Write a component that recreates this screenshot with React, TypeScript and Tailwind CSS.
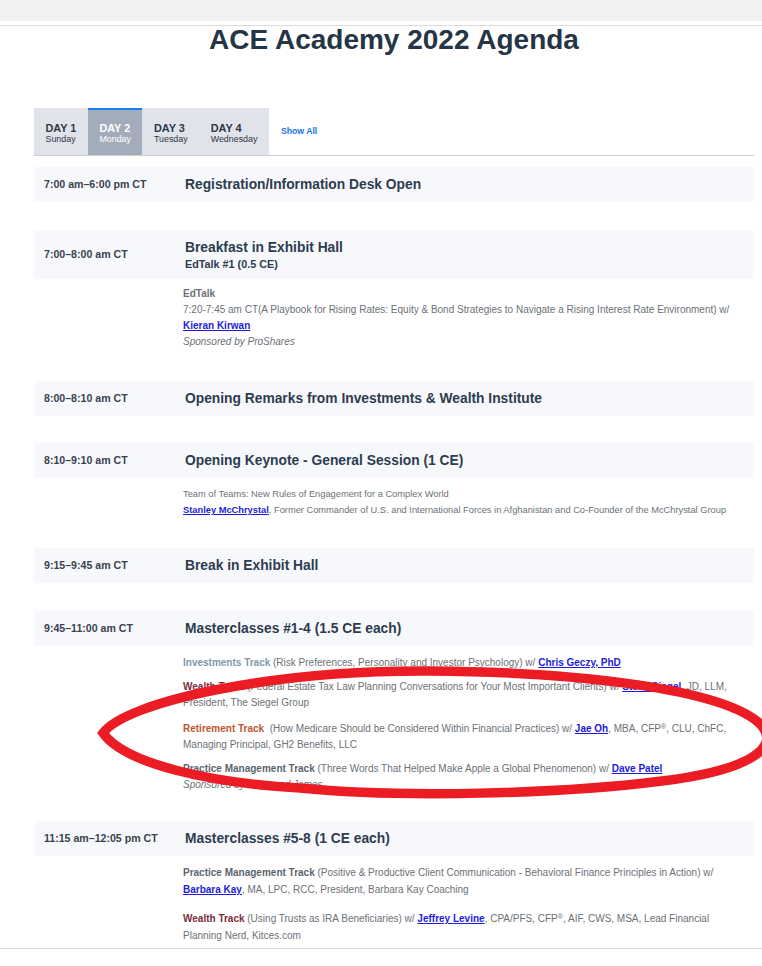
import React from "react";

const Link = ({ children }: { children: React.ReactNode }) => (
  <a href="#" className="font-bold text-[#1d1ddb] underline">
    {children}
  </a>
);

const Header = ({
  time,
  title,
  sub,
}: {
  time: string;
  title: string;
  sub?: string;
}) => (
  <div className="flex items-center bg-[#f6f8fb] py-[8.5px]">
    <div className="w-[149px] shrink-0 pl-[10px] text-[10.6px] font-bold text-[#3a4250]">
      {time}
    </div>
    <div className="pl-[2px]">
      <div className="text-[13.8px] font-bold leading-[18px] text-[#2e3c4f]">{title}</div>
      {sub && (
        <div className="text-[10.8px] font-bold leading-[14px] text-[#2e3c4f]">{sub}</div>
      )}
    </div>
  </div>
);

const Tab = ({ day, name, active }: { day: string; name: string; active?: boolean }) => (
  <div
    className={
      active
        ? "flex h-[47px] flex-col justify-center border-t-2 border-[#1b7ced] bg-[#a3acbb] px-[11.5px] text-white"
        : "flex h-[47px] flex-col justify-center border-t-2 border-transparent px-[11.5px] text-[#2f3746]"
    }
  >
    <div className="text-[10.9px] font-bold leading-[12px]">{day}</div>
    <div className="text-[8.9px] leading-[10px]">{name}</div>
  </div>
);

export default function App() {
  return (
    <div className="relative flex h-[966px] w-[762px] flex-col overflow-hidden bg-white font-['Liberation_Sans',Arial,sans-serif]">
      <div className="h-[21px] shrink-0 bg-[#f1f2f4]" />
      <div className="h-[4px] shrink-0" />
      <div className="shrink-0 border-t border-[#dcdcdc]" />
      <main className="min-h-0 flex-1">
        <div className="ml-[34px] w-[720px]">
          <h1 className="-mt-[2px] text-center text-[28px] font-bold leading-[32px] text-[#253545]">
            ACE Academy 2022 Agenda
          </h1>

          <div className="mt-[52px] flex items-center border-b border-[#cfcfcf]">
            <div className="flex bg-[#e1e3ea]">
              <Tab day="DAY 1" name="Sunday" />
              <Tab day="DAY 2" name="Monday" active />
              <Tab day="DAY 3" name="Tuesday" />
              <Tab day="DAY 4" name="Wednesday" />
            </div>
            <a href="#" className="ml-[12px] text-[8.7px] font-bold text-[#1a73e8]">
              Show All
            </a>
          </div>

          <div className="mt-[11px] flex flex-col">
            {/* 1 */}
            <Header time="7:00 am–6:00 pm CT" title="Registration/Information Desk Open" />
            <div className="h-[28px]" />

            {/* 2 */}
            <Header time="7:00–8:00 am CT" title="Breakfast in Exhibit Hall" sub="EdTalk #1 (0.5 CE)" />
            <div className="pb-[31px] pl-[149px] pr-[11px] pt-[7px] text-[10px] leading-[16px] text-[#6b7177]">
              <div className="font-bold text-[#6b7378]">EdTalk</div>
              <div>
                7:20-7:45 am CT(A Playbook for Rising Rates: Equity &amp; Bond Strategies to Navigate a
                Rising Interest Rate Environment) w/ <Link>Kieran Kirwan</Link>
              </div>
              <div className="italic">Sponsored by ProShares</div>
            </div>

            {/* 3 */}
            <Header time="8:00–8:10 am CT" title="Opening Remarks from Investments & Wealth Institute" />
            <div className="h-[27px]" />

            {/* 4 */}
            <Header time="8:10–9:10 am CT" title="Opening Keynote - General Session (1 CE)" />
            <div className="pb-[30px] pl-[149px] pr-[11px] pt-[8px] text-[9.3px] leading-[16px] text-[#6b7177]">
              <div>Team of Teams: New Rules of Engagement for a Complex World</div>
              <div>
                <Link>Stanley McChrystal</Link>, Former Commander of U.S. and International Forces in
                Afghanistan and Co-Founder of the McChrystal Group
              </div>
            </div>

            {/* 5 */}
            <Header time="9:15–9:45 am CT" title="Break in Exhibit Hall" />
            <div className="h-[28px]" />

            {/* 6 */}
            <Header time="9:45–11:00 am CT" title="Masterclasses #1-4 (1.5 CE each)" />
            <div className="pb-[28px] pl-[149px] pr-[11px] pt-[9px] text-[10px] leading-[16px] text-[#6b7177]">
              <p>
                <span className="font-bold text-[#7f97ab]">Investments Track</span> (Risk Preferences,
                Personality and Investor Psychology) w/ <Link>Chris Geczy, PhD</Link>
              </p>
              <p className="mt-[8px]">
                <span className="font-bold text-[#7b2d3f]">Wealth Track</span> (Federal Estate Tax Law
                Planning Conversations for Your Most Important Clients) w/ <Link>Steve Siegel</Link>, JD,
                LLM, President, The Siegel Group
              </p>
              <p className="mt-[10px]">
                <span className="font-bold text-[#bf5630]">Retirement Track</span>{"\u00a0 "}(How Medicare
                Should be Considered Within Financial Practices) w/ <Link>Jae Oh</Link>, MBA, CFP
                <sup className="text-[7px]">®</sup>, CLU, ChFC, Managing Principal, GH2 Benefits, LLC
              </p>
              <p className="mt-[8px]">
                <span className="font-bold text-[#5b6570]">Practice Management Track</span> (Three Words
                That Helped Make Apple a Global Phenomenon) w/ <Link>Dave Patel</Link>
              </p>
              <p className="italic">Sponsored by Raymond James</p>
            </div>

            {/* 7 */}
            <Header time="11:15 am–12:05 pm CT" title="Masterclasses #5-8 (1 CE each)" />
            <div className="pl-[149px] pr-[11px] pt-[8px] text-[10px] leading-[17px] text-[#6b7177]">
              <p>
                <span className="font-bold text-[#5b6570]">Practice Management Track</span> (Positive &amp;
                Productive Client Communication - Behavioral Finance Principles in Action) w/{" "}
                <Link>Barbara Kay</Link>, MA, LPC, RCC, President, Barbara Kay Coaching
              </p>
              <p className="mt-[12px]">
                <span className="font-bold text-[#7b2d3f]">Wealth Track</span> (Using Trusts as IRA
                Beneficiaries) w/ <Link>Jeffrey Levine</Link>, CPA/PFS, CFP
                <sup className="text-[7px]">®</sup>, AIF, CWS, MSA, Lead Financial Planning Nerd,
                Kitces.com
              </p>
            </div>
          </div>
        </div>
      </main>
      <div className="relative h-[18px] shrink-0 border-t border-[#dcdcdc] bg-white" />

      <svg
        className="pointer-events-none absolute left-0 top-0"
        width="762"
        height="966"
        viewBox="0 0 762 966"
      >
        <path
          d="M103 733 C126 702 270 670 430 671 C585 672 720 690 758 722 C786 748 745 771 662 781 C560 794 400 798 300 788 C210 783 125 764 103 733 Z"
          fill="none"
          stroke="#ec1c24"
          strokeWidth="9.5"
          strokeLinejoin="miter"
        />
      </svg>
    </div>
  );
}
